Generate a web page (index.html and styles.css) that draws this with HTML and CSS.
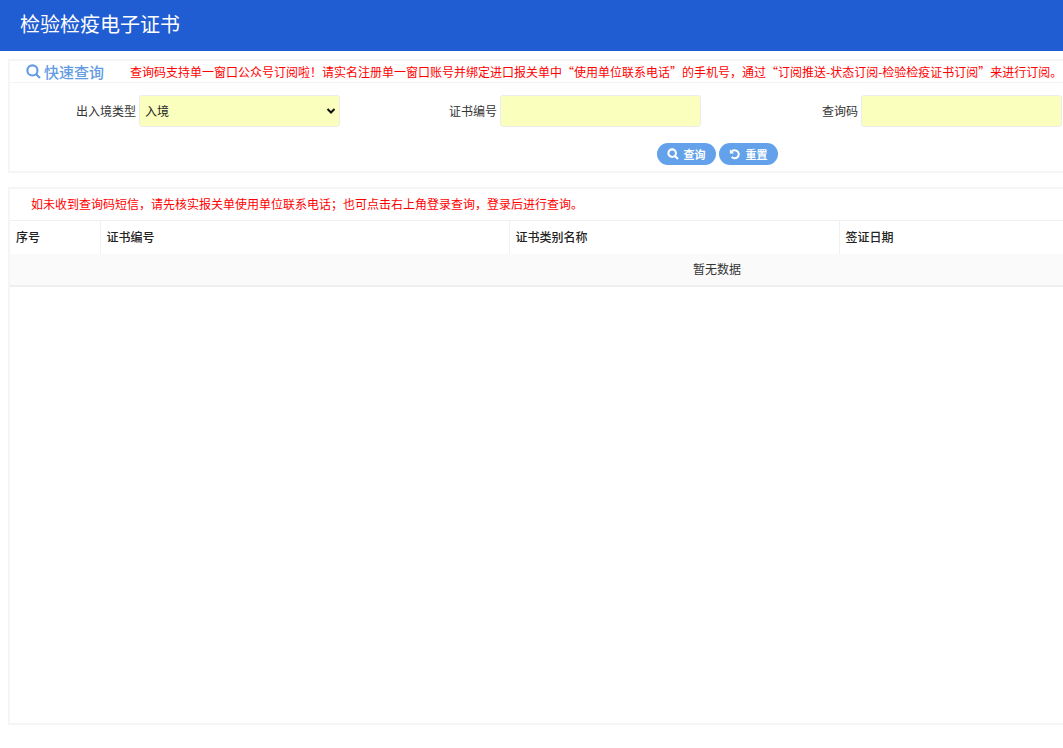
FILE: index.html
```html
<!DOCTYPE html>
<html lang="zh-CN">
<head>
<meta charset="utf-8">
<title>检验检疫电子证书</title>
<link rel="stylesheet" href="styles.css">
</head>
<body>
<header class="topbar"><h1 class="topbar-title">检验检疫电子证书</h1></header>
<main class="content">
  <section class="panel">
    <div class="panel-head">
      <h2 class="panel-title">
        <svg class="title-icon" viewBox="0 0 14 14" aria-hidden="true"><circle cx="6" cy="6" r="4.7"/><path d="M9.5 9.5L13 13"/></svg>
        快速查询
      </h2>
      <p class="notice">查询码支持单一窗口公众号订阅啦！请实名注册单一窗口账号并绑定进口报关单中“使用单位联系电话”的手机号，通过“订阅推送-状态订阅-检验检疫证书订阅”来进行订阅。</p>
    </div>
    <form class="search">
      <div class="fields">
        <div class="field">
          <label for="type">出入境类型</label>
          <div class="select-wrap">
            <select id="type" class="control"><option>入境</option><option>出境</option></select>
            <svg class="chevron" viewBox="0 0 10 8" aria-hidden="true"><path d="M1.5 2L5 5.5L8.5 2"/></svg>
          </div>
        </div>
        <div class="field"><label for="cert">证书编号</label><input id="cert" class="control" type="text"></div>
        <div class="field"><label for="code">查询码</label><input id="code" class="control" type="text"></div>
      </div>
      <div class="actions">
        <button class="btn" type="button"><svg class="btn-icon" viewBox="0 0 14 14" aria-hidden="true"><circle cx="6" cy="6" r="4.4"/><path d="M9.3 9.3L12.8 12.8"/></svg>查询</button>
        <button class="btn" type="reset"><svg class="btn-icon" viewBox="0 0 14 14" aria-hidden="true"><path d="M3.4 3.9A4.7 4.7 0 1 1 3.2 10.4"/><path class="arrow-head" d="M1 1.4V6.4H6Z"/></svg>重置</button>
      </div>
    </form>
  </section>
  <section class="panel results">
    <p class="notice results-notice">如未收到查询码短信，请先核实报关单使用单位联系电话；也可点击右上角登录查询，登录后进行查询。</p>
    <table class="grid">
      <colgroup><col class="col-index"><col class="col-number"><col class="col-kind"><col></colgroup>
      <thead><tr><th>序号</th><th>证书编号</th><th>证书类别名称</th><th>签证日期</th></tr></thead>
      <tbody><tr><td colspan="4">暂无数据</td></tr></tbody>
    </table>
  </section>
</main>
</body>
</html>
```
FILE: styles.css
```css
* { box-sizing: border-box; }
body {
  margin: 0;
  min-height: 100vh;
  display: flex;
  flex-direction: column;
  overflow-x: hidden;
  background: #fff;
  color: #333;
  font: 12px/18px "Noto Sans CJK SC", sans-serif;
}
h1, h2, p { margin: 0; }
.topbar {
  padding: 9px 20px 12px;
  background: #205cd2;
  color: #fff;
}
.topbar-title { font-size: 20px; line-height: 30px; font-weight: 400; }
.content {
  flex: 1;
  display: flex;
  flex-direction: column;
  gap: 14px;
  min-width: 1434px;
  padding: 8px 8px 23px;
}
.panel { border: 2px solid #f5f5f6; }
.panel-head {
  display: flex;
  align-items: center;
  gap: 26px;
  padding: 0 16px;
  border-bottom: 1px solid #f3f3f4;
}
.panel-title {
  display: flex;
  align-items: center;
  gap: 3px;
  color: #639ce3;
  font-size: 15px;
  line-height: 21px;
  font-weight: 500;
  white-space: nowrap;
}
svg { fill: none; stroke: currentColor; }
.title-icon { width: 15px; height: 15px; stroke-width: 2; }
.notice { color: #f00; white-space: nowrap; }
.search { padding: 12px 0 6px; }
.fields { display: grid; grid-template-columns: repeat(3, 361px); }
.field {
  display: grid;
  grid-template-columns: 126px 201px;
  gap: 3px;
  align-items: center;
}
.field label { text-align: right; }
.control {
  width: 100%;
  height: 32px;
  padding: 0 5px;
  border: 1px solid #ececec;
  border-radius: 3px;
  background: #faffbd;
  color: #222;
  font: inherit;
  appearance: none;
}
.select-wrap { position: relative; }
.chevron {
  position: absolute;
  right: 4px;
  top: 12px;
  width: 10px;
  height: 8px;
  color: #111;
  stroke-width: 2;
  pointer-events: none;
}
.actions {
  display: flex;
  justify-content: center;
  gap: 3px;
  padding-top: 16px;
}
.btn {
  display: flex;
  align-items: center;
  gap: 5px;
  height: 22px;
  padding: 0 10px;
  border: 0;
  border-radius: 11px;
  background: #63a2ea;
  color: #fff;
  font: 700 11px/18px "Noto Sans CJK SC", sans-serif;
}
.btn-icon { width: 12px; height: 12px; stroke-width: 2.4; }
.arrow-head { fill: currentColor; stroke: none; }
.results { flex: 1; }
.results-notice { padding: 6px 21px 7px; }
.grid { width: 100%; border-collapse: collapse; table-layout: fixed; }
.col-index { width: 90px; }
.col-number { width: 409px; }
.col-kind { width: 330px; }
.grid th {
  height: 33px;
  padding: 0 6px;
  border: 1px solid #f1f1f2;
  border-width: 1px 0 0 1px;
  color: #222;
  font-weight: 500;
  text-align: left;
}
.grid th:first-child { border-left: 0; }
.grid td {
  height: 32px;
  padding: 0;
  border-bottom: 2px solid #eee;
  background: #fafafa;
  text-align: center;
}
```
